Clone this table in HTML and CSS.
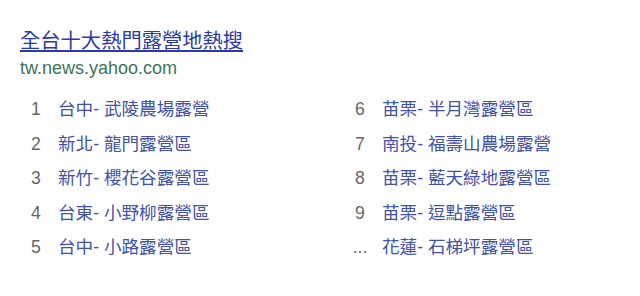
FILE: index.html
```html
<!DOCTYPE html>
<html lang="zh-Hant">
<head>
    <meta charset="UTF-8">
    <title>全台十大熱門露營地熱搜</title>
    <link rel="stylesheet" href="styles.css">
</head>
<body>
    <div class="result">
        <a class="result-title" href="#">全台十大熱門露營地熱搜</a>
        <div class="result-url">tw.news.yahoo.com</div>

        <ol class="rank-list">
            <li><span class="rank-num">1</span><a href="#">台中- 武陵農場露營</a></li>
            <li><span class="rank-num">6</span><a href="#">苗栗- 半月灣露營區</a></li>
            <li><span class="rank-num">2</span><a href="#">新北- 龍門露營區</a></li>
            <li><span class="rank-num">7</span><a href="#">南投- 福壽山農場露營</a></li>
            <li><span class="rank-num">3</span><a href="#">新竹- 櫻花谷露營區</a></li>
            <li><span class="rank-num">8</span><a href="#">苗栗- 藍天綠地露營區</a></li>
            <li><span class="rank-num">4</span><a href="#">台東- 小野柳露營區</a></li>
            <li><span class="rank-num">9</span><a href="#">苗栗- 逗點露營區</a></li>
            <li><span class="rank-num">5</span><a href="#">台中- 小路露營區</a></li>
            <li><span class="rank-num">...</span><a href="#">花蓮- 石梯坪露營區</a></li>
        </ol>
    </div>
</body>
</html>
```

FILE: styles.css
```css
body {
    margin: 0;
    background-color: #fff;
    font-family: Arial, "Liberation Sans", "Noto Sans CJK TC", sans-serif;
}

.result {
    padding: 28px 0 0 20px;
}

.result-title {
    display: inline-block;
    font-size: 20.3px;
    line-height: 26px;
    color: #2c3aa8;
    text-decoration: underline;
}

.result-url {
    margin-top: 3px;
    font-size: 18px;
    line-height: 22px;
    color: #3d7458;
}

/* two columns of five, read top to bottom in each */
.rank-list {
    list-style: none;
    margin: 10px 0 0 6px;
    padding: 0;
    display: grid;
    grid-template-columns: 324px 1fr;
    grid-auto-rows: 34.5px;
}

.rank-list li {
    display: flex;
    align-items: baseline;
    padding-top: 6px;
    font-size: 17.6px;
}

.rank-num {
    width: 20px;
    margin-right: 12px;
    text-align: center;
    color: #666;
}

.rank-list a {
    color: #4252a8;
    text-decoration: none;
}
```
